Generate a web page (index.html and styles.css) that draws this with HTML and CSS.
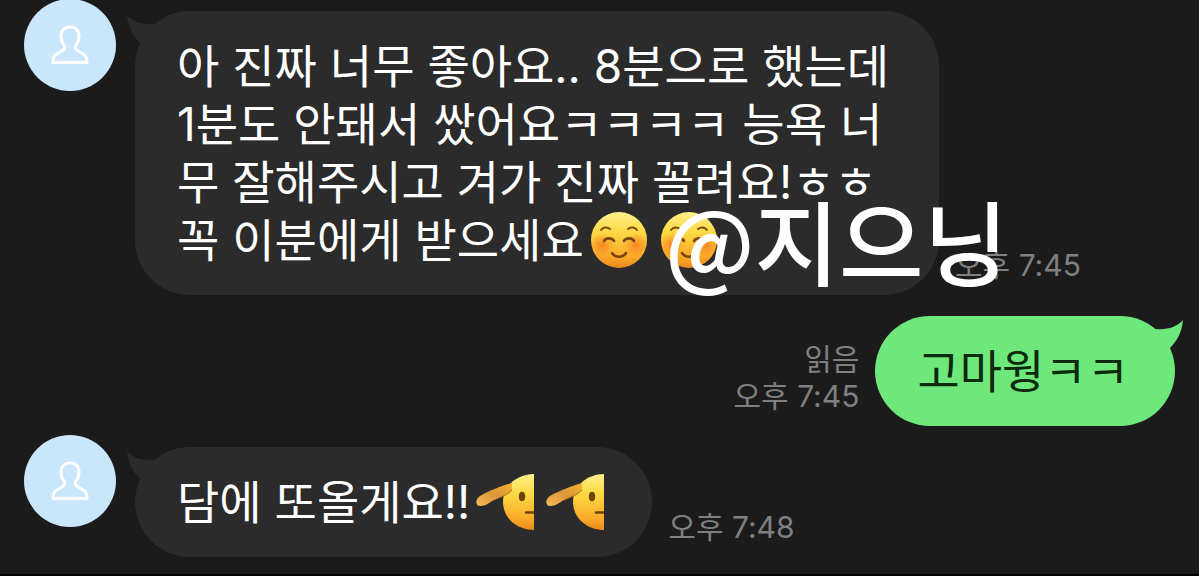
FILE: index.html
```
<!DOCTYPE html>
<html lang="ko">
<head>
    <meta charset="UTF-8">
    <meta name="viewport" content="width=device-width, initial-scale=1.0">
    <title>채팅</title>
    <link rel="stylesheet" href="styles.css">
</head>
<body>
    <!-- Shared shapes -->
    <svg class="defs" width="0" height="0" aria-hidden="true">
        <defs>
            <linearGradient id="face" x1="0" y1="0" x2="0" y2="1">
                <stop offset="0" stop-color="#fdf08a"/>
                <stop offset="0.35" stop-color="#fdda45"/>
                <stop offset="0.8" stop-color="#fba928"/>
                <stop offset="1" stop-color="#e88a1c"/>
            </linearGradient>
            <radialGradient id="blush">
                <stop offset="0" stop-color="#f5741c" stop-opacity="0.75"/>
                <stop offset="1" stop-color="#f5741c" stop-opacity="0"/>
            </radialGradient>
            <linearGradient id="hand" x1="1" y1="0" x2="0" y2="1">
                <stop offset="0" stop-color="#f3b32f"/>
                <stop offset="0.5" stop-color="#dd9636"/>
                <stop offset="1" stop-color="#f5bd55"/>
            </linearGradient>
            <symbol id="person" viewBox="0 0 38 42">
                <path d="M13.500 21.500C10.500 18.500 10 15.500 10 12C10 6.500 13.500 3 19 3S28 6.500 28 12C28 15.500 27.500 18.500 24.500 21.500C23.500 24 24.500 25.500 27 27L33 30.500C35.500 32 36 34 36 38.500H2C2 34 2.500 32 5 30.500L11 27C13.500 25.500 14.500 24 13.500 21.500Z" fill="none" stroke="#fff" stroke-width="3" stroke-linejoin="round"/>
            </symbol>
            <symbol id="tail" viewBox="0 0 32 32">
                <path d="M0 0C6 7 16 10 27 9L32 32L13 28C6 21 1 12 0 0Z" fill="currentColor"/>
            </symbol>
            <symbol id="smile" viewBox="0 0 58 58">
                <circle cx="29" cy="29" r="28" fill="url(#face)"/>
                <circle cx="12" cy="34" r="12" fill="url(#blush)"/>
                <circle cx="46" cy="34" r="12" fill="url(#blush)"/>
                <g fill="none" stroke="#7a4a0c" stroke-linecap="round">
                    <path d="M11 19C13 16 17 15.500 20 18M38 18C41 15.500 45 16 47 19" stroke-width="2"/>
                    <path d="M14 30C16 26.500 22 26.500 24 30M34 30C36 26.500 42 26.500 44 30" stroke-width="2.600"/>
                    <path d="M22 42C25 47 33 47 36 42" stroke-width="2.600"/>
                </g>
            </symbol>
            <symbol id="salute" viewBox="0 0 58 58">
                <path d="M58 1C41 1 27 13 27 29S41 57 58 57Z" fill="url(#face)"/>
                <path d="M36 10C28 12 12 18 4 23C-2 27 0 34 5 33C9 33 13 30 18 27C24 24 32 22 36 17Z" fill="url(#hand)"/>
                <path d="M18 27C24 24 32 22 36 17" fill="none" stroke="#b8701e" stroke-width="1"/>
                <ellipse cx="46" cy="23.500" rx="3.200" ry="4.800" fill="#6b4508"/>
                <path d="M50 39.500H58" stroke="#6b4508" stroke-width="2.600" stroke-linecap="round"/>
            </symbol>
        </defs>
    </svg>

    <main class="chat">
        <div class="message">
            <div class="avatar"><svg class="avatar-icon" role="img" aria-label="프로필"><use href="#person"/></svg></div>
            <div class="bubble">
                <svg class="tail" aria-hidden="true"><use href="#tail"/></svg>
                아 진짜 너무 좋아요.. 8분으로 했는데 1분도 안돼서 쌌어요ㅋㅋㅋㅋ 능욕 너무 잘해주시고 겨가 진짜 꼴려요!ㅎㅎ 꼭 이분에게 받으세요<svg class="emoji" role="img" aria-label="미소"><use href="#smile"/></svg><svg class="emoji" role="img" aria-label="미소"><use href="#smile"/></svg>
                <span class="watermark">@지으닝</span>
            </div>
            <div class="meta"><time>오후 7:45</time></div>
        </div>

        <div class="message mine">
            <div class="bubble">
                <svg class="tail" aria-hidden="true"><use href="#tail"/></svg>
                고마웡ㅋㅋ
            </div>
            <div class="meta"><span>읽음</span><time>오후 7:45</time></div>
        </div>

        <div class="message">
            <div class="avatar"><svg class="avatar-icon" role="img" aria-label="프로필"><use href="#person"/></svg></div>
            <div class="bubble">
                <svg class="tail" aria-hidden="true"><use href="#tail"/></svg>
                담에 또올게요!!<svg class="emoji" role="img" aria-label="경례"><use href="#salute"/></svg><svg class="emoji" role="img" aria-label="경례"><use href="#salute"/></svg>
            </div>
            <div class="meta"><time>오후 7:48</time></div>
        </div>
    </main>
</body>
</html>
```
FILE: styles.css
```
* {
    box-sizing: border-box;
}
body {
    margin: 0;
    min-height: 100vh;
    background-color: #1b1b1b;
    border-bottom: 2px solid #000;
    color: #fff;
    font-family: Inter, "Noto Sans CJK KR", sans-serif;
    overflow: hidden;
}
.defs {
    position: absolute;
}
.chat {
    display: flex;
    flex-direction: column;
    gap: 9px;
    margin-top: -1px;
    padding: 0 24px;
}
.message {
    display: flex;
    align-items: flex-end;
}
.message.mine {
    flex-direction: row-reverse;
}
.avatar {
    display: flex;
    flex: none;
    align-self: flex-start;
    align-items: center;
    justify-content: center;
    width: 92px;
    height: 92px;
    margin-right: 19px;
    border-radius: 50%;
    background-color: #c9e6fb;
}
.avatar-icon {
    width: 38px;
    height: 42px;
}
.bubble {
    position: relative;
    max-width: 804px;
    margin-top: 12px;
    padding: 26px 42px;
    border-radius: 55px;
    background-color: #2b2b2b;
    font-size: 46px;
    line-height: 58px;
}
.mine .bubble {
    padding: 26px 46px 26px 42px;
    background-color: #6ee87b;
    color: #0c2a0e;
}
.tail {
    position: absolute;
    top: 4px;
    left: -8px;
    width: 32px;
    height: 32px;
    color: #2b2b2b;
}
.mine .tail {
    left: auto;
    right: -8px;
    color: #6ee87b;
    transform: scaleX(-1);
}
.emoji {
    width: 58px;
    height: 58px;
    margin: 0 6px;
    vertical-align: top;
}
.watermark {
    position: absolute;
    top: 182px;
    left: 530px;
    font-family: "Noto Sans CJK KR", sans-serif;
    font-size: 92px;
    font-weight: 500;
    line-height: 92px;
    white-space: nowrap;
}
.meta {
    display: flex;
    flex: none;
    flex-direction: column;
    margin: 0 16px 11px;
    color: #808080;
    font-size: 30px;
    line-height: 37px;
}
.mine .meta {
    align-items: flex-end;
}
```
